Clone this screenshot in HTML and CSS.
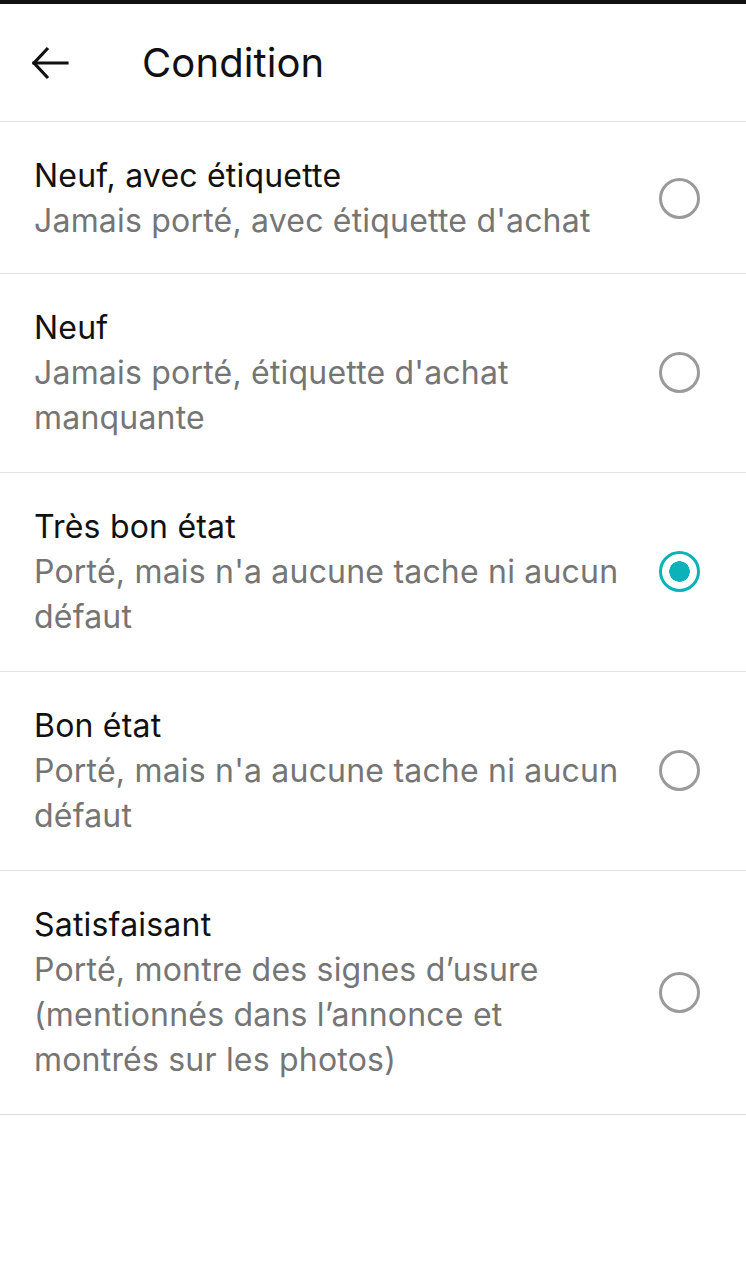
FILE: index.html
```html
<!DOCTYPE html>
<html lang="fr">

<head>
  <meta charset="UTF-8">
  <meta name="viewport" content="width=device-width, initial-scale=1.0">
  <title>Condition</title>
  <link rel="stylesheet" href="styles.css">
</head>

<body>
  <div class="status-bar"></div>
  <div class="header">
    <button class="back-btn" aria-label="Retour">
      <svg width="40" height="40" viewBox="0 0 40 40" fill="none" stroke="#111" stroke-width="3.2" stroke-linecap="square">
        <path d="M4 20h33" />
        <path d="M18 5L4 20l14 15" stroke-linecap="butt" />
      </svg>
    </button>
    <h1 class="header-title">Condition</h1>
  </div>

  <ul class="condition-list">
    <li class="condition-row">
      <div class="condition-text">
        <div class="condition-title">Neuf, avec étiquette</div>
        <div class="condition-desc">Jamais porté, avec étiquette d'achat</div>
      </div>
      <span class="radio"></span>
    </li>
    <li class="condition-row">
      <div class="condition-text">
        <div class="condition-title">Neuf</div>
        <div class="condition-desc">Jamais porté, étiquette d'achat manquante</div>
      </div>
      <span class="radio"></span>
    </li>
    <li class="condition-row">
      <div class="condition-text">
        <div class="condition-title">Très bon état</div>
        <div class="condition-desc">Porté, mais n'a aucune tache ni aucun défaut</div>
      </div>
      <span class="radio radio-checked"></span>
    </li>
    <li class="condition-row">
      <div class="condition-text">
        <div class="condition-title">Bon état</div>
        <div class="condition-desc">Porté, mais n'a aucune tache ni aucun défaut</div>
      </div>
      <span class="radio"></span>
    </li>
    <li class="condition-row">
      <div class="condition-text">
        <div class="condition-title">Satisfaisant</div>
        <div class="condition-desc">Porté, montre des signes d’usure (mentionnés dans l’annonce et montrés sur les photos)</div>
      </div>
      <span class="radio"></span>
    </li>
  </ul>
</body>

</html>
```

FILE: styles.css
```css
* {
  margin: 0;
  padding: 0;
  box-sizing: border-box;
}

body {
  background-color: #fff;
  font-family: Inter, "Noto Sans", sans-serif;
  color: #111;
}

.status-bar {
  height: 4px;
  background-color: #111;
}

.header {
  display: flex;
  align-items: center;
  height: 118px;
  padding-left: 30px;
  border-bottom: 1px solid #e2e2e2;
}

.back-btn {
  display: flex;
  width: 40px;
  height: 40px;
  background: none;
  border: none;
  outline: none;
  cursor: pointer;
}

.header-title {
  margin-left: 72px;
  font-size: 40px;
  font-weight: 400;
  letter-spacing: 0.1px;
}

.condition-list {
  list-style: none;
}

.condition-row {
  display: flex;
  align-items: center;
  padding: 31px 46px 32px 34px;
  border-bottom: 1px solid #e2e2e2;
}

.condition-row:first-child {
  padding-bottom: 30px;
}

.condition-text {
  flex: 1;
  padding-right: 30px;
  font-size: 32px;
  line-height: 45px;
  letter-spacing: 0.2px;
}

.condition-title {
  color: #111;
}

.condition-desc {
  color: #757575;
}

.radio {
  flex: none;
  width: 41px;
  height: 41px;
  border: 3px solid #9a9a9a;
  border-radius: 50%;
}

.radio-checked {
  border-color: #0bb2ba;
  background: radial-gradient(circle, #0bb2ba 0 10px, transparent 10.5px);
}
```
